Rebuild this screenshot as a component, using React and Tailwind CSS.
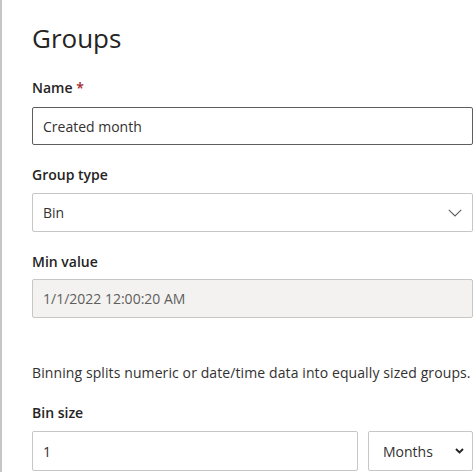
import React from "react";

function ThinChevron() {
  return (
    <svg width="14" height="8" viewBox="0 0 14 8" fill="none">
      <path d="M0.8 0.8 L7 7 L13.2 0.8" stroke="#605e5c" strokeWidth="1.1" />
    </svg>
  );
}

function BoldChevron() {
  return (
    <svg width="9" height="6" viewBox="0 0 9 6" fill="none">
      <path d="M1 1 L4.5 4.5 L8 1" stroke="#252423" strokeWidth="1.9" />
    </svg>
  );
}

function Label({ children, className = "" }) {
  return (
    <div className={"h-[20px] leading-[20px] text-[14px] font-semibold text-[#252423] " + className}>
      {children}
    </div>
  );
}

export default function App() {
  return (
    <div
      className="w-[475px] h-[472px] overflow-hidden bg-white border-l-2 border-[#c8c6c4] pl-[30px] pr-[2px]"
      style={{ fontFamily: '"Open Sans", "Noto Sans", sans-serif' }}
    >
      <div className="pt-[21px] h-[34px] box-content leading-[34px] text-[26px] font-normal text-[#252423]">
        Groups
      </div>

      <Label className="mt-[23px]">
        Name <span className="text-[#a4262c]">*</span>
      </Label>
      <div className="mt-[9px] h-[38px] border border-[#605e5c] rounded-[2px] flex items-center px-[10px] text-[14px] text-[#323130]">
        Created month
      </div>

      <Label className="mt-[20px]">Group type</Label>
      <div className="mt-[8px] h-[39px] border border-[#c8c6c4] rounded-[2px] flex items-center justify-between pl-[10px] pr-[10px] text-[14px] text-[#323130]">
        <span>Bin</span>
        <ThinChevron />
      </div>

      <Label className="mt-[20px]">Min value</Label>
      <div className="mt-[7px] h-[39px] border border-[#c8c6c4] bg-[#f3f2f1] rounded-[2px] flex items-center px-[10px] text-[14px] text-[#605e5c]">
        1/1/2022 12:00:20 AM
      </div>

      <p className="mt-[45px] h-[20px] leading-[20px] text-[14px] text-[#323130] whitespace-nowrap tracking-[0.1px]">
        Binning splits numeric or date/time data into equally sized groups.
      </p>

      <Label className="mt-[20px]">Bin size</Label>
      <div className="mt-[8px] flex gap-[10px]">
        <div className="flex-1 h-[40px] border border-[#c8c6c4] rounded-[2px] flex items-center px-[10px] text-[14px] text-[#323130]">
          1
        </div>
        <div className="w-[105px] h-[40px] border border-[#c8c6c4] rounded-[2px] flex items-center justify-between pl-[14px] pr-[8px] text-[14px] text-[#323130]">
          <span>Months</span>
          <BoldChevron />
        </div>
      </div>
    </div>
  );
}
